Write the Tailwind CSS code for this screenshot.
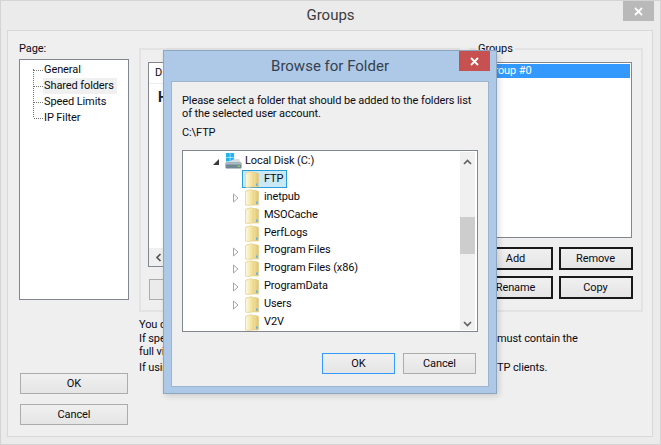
<!DOCTYPE html>
<html><head><meta charset="utf-8">
<script src="https://cdn.jsdelivr.net/npm/@tailwindcss/browser@4"></script>
</head>
<body class="bg-white">
<svg width="0" height="0" class="absolute">
<defs>
<linearGradient id="fg" x1="0" y1="0" x2="1" y2="0"><stop offset="0" stop-color="#f7e9a8"/><stop offset="0.6" stop-color="#f5e29a"/><stop offset="1" stop-color="#dcc272"/></linearGradient>
<linearGradient id="fg2" x1="0" y1="0" x2="1" y2="0"><stop offset="0" stop-color="#fefbe0"/><stop offset="1" stop-color="#efd98c"/></linearGradient>
<symbol id="folder" viewBox="0 0 14 17">
<path d="M0.5 2.5 L3 1.5 L11 1.5 L13.5 2.5 L13.5 16 L0.5 16 Z" fill="url(#fg)" stroke="#dcc985" stroke-width="0.6"/>
<path d="M0.5 2.5 L6 0.5 L8.5 1.5 L8.5 15.5 L3 16.5 L0.5 16 Z" fill="url(#fg2)" stroke="#e6d28c" stroke-width="0.6"/>
<rect x="11" y="12.5" width="1.6" height="2.2" fill="#5fb0e0"/>
</symbol>
<symbol id="open" viewBox="0 0 8 10"><path d="M1.5 1 L6 5 L1.5 9 Z" fill="#fff" stroke="#a6a6a6"/></symbol>
</defs>
</svg>
<div class="relative w-[661px] h-[445px] overflow-hidden bg-[#ebebeb] border border-[#d4d4d4] font-['Roboto','Noto_Sans',sans-serif] text-[11px] tracking-[-0.1px] leading-[14px] text-[#0a0a14] whitespace-nowrap">
  <!-- outer title -->
  <div class="relative h-[29px] flex items-center justify-center text-[15px] tracking-normal text-[#3c3c3c] pb-[1px]">
    <span>Groups</span>
    <div class="absolute right-[6px] top-0 w-[31px] h-[20px] bg-[#b9b9b9] flex items-center justify-center">
      <svg width="9" height="9" viewBox="0 0 9 9"><path d="M1 1 L8 8 M8 1 L1 8" stroke="#fff" stroke-width="1.8"/></svg>
    </div>
  </div>
  <!-- outer panel -->
  <div class="ml-[6px] w-[646px] h-[407px] border border-[#d9d9d9] bg-[#efefef] flex">
    <!-- left col -->
    <div class="ml-[11px] w-[111px] flex flex-col shrink-0">
      <div class="mt-[11px] h-[17px]">Page:</div>
      <div class="relative w-[110px] h-[241px] bg-white border border-[#82878f] pt-[2px]">
        <div class="absolute left-[13px] top-[9px] h-[48px] border-l border-dotted border-[#777]"></div>
        <div class="flex flex-col">
          <div class="relative h-[16px] pl-[24px] flex items-center"><span class="absolute left-[14px] w-[9px] border-t border-dotted border-[#777]"></span>General</div>
          <div class="relative h-[16px] pl-[24px] flex items-center"><span class="absolute left-[14px] w-[9px] border-t border-dotted border-[#777]"></span><span class="-ml-[1px] pl-[1px] w-[74px] h-[16px] bg-[#f0f0f0] flex items-center">Shared folders</span></div>
          <div class="relative h-[16px] pl-[24px] flex items-center"><span class="absolute left-[14px] w-[9px] border-t border-dotted border-[#777]"></span>Speed Limits</div>
          <div class="relative h-[16px] pl-[24px] flex items-center"><span class="absolute left-[14px] w-[9px] border-t border-dotted border-[#777]"></span>IP Filter</div>
        </div>
      </div>
      <div class="mt-[73px] ml-[1px] w-[108px] h-[21px] pt-[1px] border border-[#acacac] bg-gradient-to-b from-[#f0f0f0] to-[#e5e5e5] flex items-center justify-center">OK</div>
      <div class="mt-[10px] ml-[1px] w-[108px] h-[21px] pt-[1px] border border-[#acacac] bg-gradient-to-b from-[#f0f0f0] to-[#e5e5e5] flex items-center justify-center">Cancel</div>
    </div>
    <!-- right area -->
    <div class="ml-[9px] flex-1 flex flex-col">
      <div class="mt-[17px] flex h-[264px]">
        <div class="w-[321px] h-[264px] border-2 border-[#e3e3e3] pt-[12px] pl-[7px]">
          <div class="relative w-[60px] h-[205px] bg-white border border-[#82878f]">
            <div class="h-[21px] pl-[6px] border-b border-[#eeeeee] flex items-center">D</div>
            <div class="pl-[9px] pt-[4px] text-[14px] leading-[18px] font-bold text-[#10203a]">H</div>
            <div class="absolute left-0 bottom-0 w-full h-[18px] bg-[#f0f0f0] flex items-center pl-[6px]">
              <svg width="7" height="9" viewBox="0 0 7 9"><path d="M5.5 1 L2 4.5 L5.5 8" fill="none" stroke="#555" stroke-width="1.7"/></svg>
            </div>
          </div>
          <div class="mt-[12px] ml-[1px] w-[60px] h-[21px] border border-[#acacac] bg-[#ebebeb]"></div>
        </div>
        <div class="ml-[9px] w-[174px] h-[264px] border-2 border-[#e3e3e3] relative">
          <span class="absolute left-[5px] -top-[8px] px-[2px] bg-[#efefef]">Groups</span>
          <div class="absolute -left-[8px] top-[12px] w-[169px] h-[176px] bg-white border border-[#82878f] p-[1px]">
            <div class="h-[14px] bg-[#3399ff] text-white pl-[22px] flex items-center">Group #0</div>
          </div>
          <div class="absolute left-[7px] top-[197px] grid grid-cols-[75px_74px] gap-x-[6px] gap-y-[6px]">
            <div class="h-[23px] pt-[1px] border-2 border-[#1a1a1a] bg-gradient-to-b from-[#f0f0f0] to-[#e5e5e5] flex items-center justify-center">Add</div>
            <div class="h-[23px] pt-[1px] pr-[1px] border-2 border-[#1a1a1a] bg-gradient-to-b from-[#f0f0f0] to-[#e5e5e5] flex items-center justify-center">Remove</div>
            <div class="h-[23px] pt-[1px] border-2 border-[#1a1a1a] bg-gradient-to-b from-[#f0f0f0] to-[#e5e5e5] flex items-center justify-center">Rename</div>
            <div class="h-[23px] pt-[1px] pr-[1px] border-2 border-[#1a1a1a] bg-gradient-to-b from-[#f0f0f0] to-[#e5e5e5] flex items-center justify-center">Copy</div>
          </div>
        </div>
      </div>
      <div class="mt-[6px] grid grid-cols-[358px_1fr]">
        <div class="h-[14px]">You c</div><div></div>
        <div class="h-[13px]">If spe</div><div class="h-[13px]">must contain the</div>
        <div class="h-[16px]">full vi</div><div></div>
        <div class="h-[14px]">If usin</div><div>TP clients.</div>
      </div>
    </div>
  </div>
  <!-- dialog -->
  <div class="absolute left-[162px] top-[49px] w-[334px] h-[344px] bg-[#adc9e7] border border-[#8ea5c0] shadow-[2px_2px_6px_rgba(0,0,0,0.15)] flex flex-col">
    <div class="relative h-[30px] flex items-center justify-center text-[15px] tracking-normal text-[#36414f]">
      <span>Browse for Folder</span>
      <div class="absolute left-[295px] top-0 w-[31px] h-[20px] bg-[#c75050] flex items-center justify-center">
        <svg width="9" height="9" viewBox="0 0 9 9"><path d="M1 1 L8 8 M8 1 L1 8" stroke="#fff" stroke-width="1.8"/></svg>
      </div>
    </div>
    <div class="ml-[7px] w-[318px] h-[306px] bg-[#efefef] border border-[#9db4cf] pl-[10px]">
      <div class="mt-[12px] h-[13px] leading-[13px]">Please select a folder that should be added to the folders list</div>
      <div class="h-[13px] leading-[13px]">of the selected user account.</div>
      <div class="mt-[6px] h-[14px]">C:\FTP</div>
      <div class="relative mt-[10px] w-[296px] h-[182px] bg-white border border-[#82878f]">
        <div class="absolute left-0 top-0 w-[280px] h-full flex flex-col pt-[1px]">
          <div class="relative h-[18px] flex items-center pl-[62px]">
            <svg class="absolute left-[29px] top-[6px]" width="8" height="8" viewBox="0 0 8 8"><path d="M7 1 L7 7 L1 7 Z" fill="#3a3a3a"/></svg>
            <svg class="absolute left-[42px] top-[1px]" width="17" height="16" viewBox="0 0 17 16">
              <rect x="1" y="0" width="3.8" height="4" fill="#1fb4f0"/><rect x="5.3" y="0" width="3.8" height="4" fill="#1fb4f0"/><rect x="1" y="4.5" width="3.8" height="4" fill="#1fb4f0"/><rect x="5.3" y="4.5" width="3.8" height="4" fill="#1fb4f0"/>
              <path d="M9.5 6 L14 6 L16 10 L1 10 Z" fill="#d8dde0"/>
              <rect x="0.5" y="9.5" width="16" height="6" rx="1" fill="#6f8794"/>
              <rect x="1" y="10" width="15" height="1.5" fill="#a9bcc6"/>
              <rect x="12.5" y="12.5" width="2.5" height="1.5" fill="#7fd14a"/>
            </svg>
            Local Disk (C:)
          </div>
          <div class="relative h-[18px] flex items-center pl-[81px]">
            <span class="absolute left-[59px] top-0 w-[45px] h-[18px] bg-[#cbe8f6] border border-[#26a0da]"></span>
            <svg class="absolute left-[62px] top-[1px]" width="14" height="17"><use href="#folder"/></svg>
            <span class="relative">FTP</span>
          </div>
          <div class="relative h-[18px] flex items-center pl-[81px]">
            <svg class="absolute left-[49px] top-[5px]" width="8" height="10"><use href="#open"/></svg>
            <svg class="absolute left-[62px] top-[1px]" width="14" height="17"><use href="#folder"/></svg>inetpub</div>
          <div class="relative h-[18px] flex items-center pl-[81px]"><svg class="absolute left-[62px] top-[1px]" width="14" height="17"><use href="#folder"/></svg>MSOCache</div>
          <div class="relative h-[18px] flex items-center pl-[81px]"><svg class="absolute left-[62px] top-[1px]" width="14" height="17"><use href="#folder"/></svg>PerfLogs</div>
          <div class="relative h-[18px] flex items-center pl-[81px]">
            <svg class="absolute left-[49px] top-[5px]" width="8" height="10"><use href="#open"/></svg>
            <svg class="absolute left-[62px] top-[1px]" width="14" height="17"><use href="#folder"/></svg>Program Files</div>
          <div class="relative h-[18px] flex items-center pl-[81px]">
            <svg class="absolute left-[49px] top-[5px]" width="8" height="10"><use href="#open"/></svg>
            <svg class="absolute left-[62px] top-[1px]" width="14" height="17"><use href="#folder"/></svg>Program Files (x86)</div>
          <div class="relative h-[18px] flex items-center pl-[81px]">
            <svg class="absolute left-[49px] top-[5px]" width="8" height="10"><use href="#open"/></svg>
            <svg class="absolute left-[62px] top-[1px]" width="14" height="17"><use href="#folder"/></svg>ProgramData</div>
          <div class="relative h-[18px] flex items-center pl-[81px]">
            <svg class="absolute left-[49px] top-[5px]" width="8" height="10"><use href="#open"/></svg>
            <svg class="absolute left-[62px] top-[1px]" width="14" height="17"><use href="#folder"/></svg>Users</div>
          <div class="relative h-[18px] flex items-center pl-[81px]"><svg class="absolute left-[62px] top-[1px]" width="14" height="17"><use href="#folder"/></svg>V2V</div>
        </div>
        <div class="absolute left-[277px] top-[1px] w-[15px] h-[178px] bg-[#f0f0f0] flex flex-col items-center">
          <svg class="mt-[7px]" width="9" height="7" viewBox="0 0 9 7"><path d="M1 5 L4.5 1.5 L8 5" fill="none" stroke="#606060" stroke-width="1.6"/></svg>
          <div class="mt-[51px] w-[15px] h-[37px] bg-[#cdcdcd]"></div>
          <svg class="mt-[66px]" width="9" height="7" viewBox="0 0 9 7"><path d="M1 2 L4.5 5.5 L8 2" fill="none" stroke="#606060" stroke-width="1.6"/></svg>
        </div>
      </div>
      <div class="mt-[21px] ml-[140px] flex gap-[8px]">
        <div class="w-[73px] h-[21px] pt-[1px] border border-[#3399ff] bg-gradient-to-b from-[#f0f0f0] to-[#e5e5e5] flex items-center justify-center">OK</div>
        <div class="w-[73px] h-[21px] pt-[1px] border border-[#acacac] bg-gradient-to-b from-[#f0f0f0] to-[#e5e5e5] flex items-center justify-center">Cancel</div>
      </div>
    </div>
  </div>
</div>
</body></html>
